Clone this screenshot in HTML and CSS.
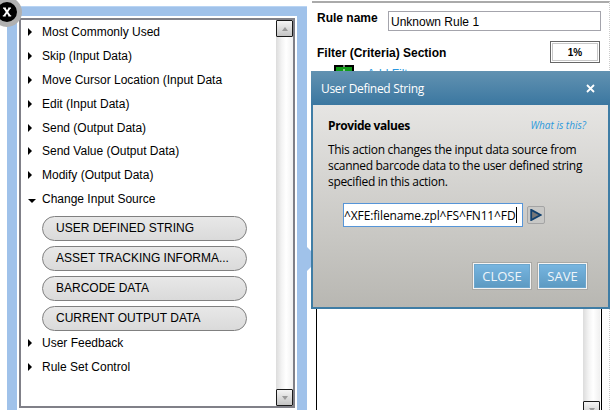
FILE: index.html
```html
<!DOCTYPE html>
<html lang="en">
<head>
  <meta charset="UTF-8">
  <meta name="viewport" content="width=device-width, initial-scale=1.0">
  <title>Rule Editor</title>
  <link rel="stylesheet" href="styles.css">
</head>
<body>
  <div class="page">
    <div class="action-panel">
      <div class="action-box">
        <ul class="action-list">
          <li class="category"><span class="arrow"></span>Most Commonly Used</li>
          <li class="category"><span class="arrow"></span>Skip (Input Data)</li>
          <li class="category"><span class="arrow"></span>Move Cursor Location (Input Data</li>
          <li class="category"><span class="arrow"></span>Edit (Input Data)</li>
          <li class="category"><span class="arrow"></span>Send (Output Data)</li>
          <li class="category"><span class="arrow"></span>Send Value (Output Data)</li>
          <li class="category"><span class="arrow"></span>Modify (Output Data)</li>
          <li class="category"><span class="arrow open"></span>Change Input Source</li>
          <li class="action-buttons">
            <button class="action-button">USER DEFINED STRING</button>
            <button class="action-button">ASSET TRACKING INFORMA...</button>
            <button class="action-button">BARCODE DATA</button>
            <button class="action-button">CURRENT OUTPUT DATA</button>
          </li>
          <li class="category"><span class="arrow"></span>User Feedback</li>
          <li class="category"><span class="arrow"></span>Rule Set Control</li>
        </ul>
        <div class="scrollbar">
          <div class="scroll-button"><span class="scroll-up"></span></div>
          <div class="scroll-button"><span class="scroll-down"></span></div>
        </div>
      </div>
      <div class="panel-close">
        <svg width="10" height="10" viewBox="0 0 10 10"><path d="M1 .5h2.900v1L5 3.300 6.200 1.500v-1H9v1.200h-.7L6.200 4.900 8.500 8.300H9.200v1.200H6.300v-1L5 6.500 3.700 8.500v1H.8V8.300h.7l2.300-3.400-2.100-3.200H1z" fill="#fff"/></svg>
      </div>
      <div class="panel-pointer"></div>
    </div>

    <div class="rule-panel">
      <div class="rule-row">
        <label class="rule-label" for="ruleName">Rule name</label>
        <input class="rule-input" type="text" id="ruleName" value="Unknown Rule 1">
      </div>
      <div class="filter-row">
        <span class="filter-label">Filter (Criteria) Section</span>
        <button class="percent-button">1%</button>
      </div>
      <div class="add-filter">
        <svg class="add-icon" width="20" height="20" viewBox="0 0 20 20"><path d="M1 1h18v18H1z" fill="#109a18" stroke="#000" stroke-width="2"/><path d="M10 0v2M10 4v12M4 10h12" stroke="#fff" stroke-width="1"/></svg>
        <a class="add-link">Add Filter</a>
      </div>
      <div class="rule-list">
        <div class="scrollbar">
          <div class="scroll-button"><span class="scroll-down"></span></div>
        </div>
      </div>
    </div>
  </div>

  <div class="dialog">
    <div class="dialog-header">
      <span class="dialog-title">User Defined String</span>
      <svg class="dialog-close" width="9" height="9" viewBox="0 0 9 9"><path d="M1 1l7 7M8 1L1 8" stroke="#fff" stroke-width="1.800"/></svg>
    </div>
    <div class="dialog-body">
      <div class="dialog-top">
        <span class="dialog-heading">Provide values</span>
        <a class="dialog-help">What is this?</a>
      </div>
      <p class="dialog-text">This action changes the input data source from<br>scanned barcode data to the user defined string<br>specified in this action.</p>
      <div class="value-row">
        <div class="value-input"><span class="value-text">^XFE:filename.zpl^FS^FN11^FD</span><span class="caret"></span></div>
        <div class="play-button">
          <svg width="12" height="12" viewBox="0 0 12 12"><path d="M1.200.9L10.600 6 1.200 11.100z" fill="#777" stroke="#12416e" stroke-width="1.800"/></svg>
        </div>
      </div>
      <div class="dialog-buttons">
        <button class="dialog-button close">CLOSE</button>
        <button class="dialog-button save">SAVE</button>
      </div>
    </div>
  </div>
</body>
</html>
```

FILE: styles.css
```css
* {
  box-sizing: border-box;
}
body {
  margin: 0;
  height: 410px;
  overflow: hidden;
  position: relative;
  background-color: #fff;
  font-family: "Liberation Sans", Arial, sans-serif;
  font-size: 12px;
  color: #000;
}
button,
input {
  font-family: inherit;
  margin: 0;
}
.page {
  display: flex;
  height: 430px;
  padding-left: 7px;
}

/* left panel */
.action-panel {
  position: relative;
  width: 300px;
  margin-top: 6px;
  padding: 9px 10px 0;
  background-color: #a0c2ea;
  border-top: 1px solid #b9d4f3;
}
.action-box {
  display: flex;
  width: 276px;
  height: 390px;
  margin: 2px;
  border: 2px solid #808088;
  outline: 2px solid #fff;
  background-color: #fff;
}
.action-list {
  flex: 1;
  list-style-type: none;
  margin: 0;
  padding: 0 0 0 7px;
}
.category {
  display: flex;
  align-items: center;
  height: 23.900px;
  white-space: nowrap;
}
.arrow {
  width: 14px;
  height: 8px;
}
.arrow::before {
  content: "";
  display: block;
  width: 0;
  height: 0;
  border-left: 4px solid #000;
  border-top: 4px solid transparent;
  border-bottom: 4px solid transparent;
}
.arrow.open {
  padding-top: 4px;
}
.arrow.open::before {
  border-top: 4px solid #000;
  border-left: 4px solid transparent;
  border-right: 4px solid transparent;
  border-bottom: none;
}
.action-buttons {
  display: flex;
  flex-direction: column;
  gap: 5px;
  padding: 5px 0 0 14px;
}
.action-button {
  width: 205px;
  height: 25px;
  padding: 0 0 1px 13px;
  border: 1px solid #808080;
  border-radius: 13px;
  background: linear-gradient(#e8e8e8, #dadada);
  font-size: 12px;
  text-align: left;
  color: #000;
}
.scrollbar {
  display: flex;
  flex-direction: column;
  justify-content: space-between;
  width: 17px;
  background: linear-gradient(to right, #dcdcdc, #f4f4f4 35%, #fff 60%, #f0f0f0);
}
.scroll-button {
  display: flex;
  align-items: center;
  justify-content: center;
  height: 17px;
  border: 1px solid #1a1a1a;
  border-radius: 1px;
  background: linear-gradient(#f4f4f4, #c4c4c4);
}
.scroll-up,
.scroll-down {
  border-left: 3px solid transparent;
  border-right: 3px solid transparent;
}
.scroll-up {
  border-bottom: 4px solid #999;
}
.scroll-down {
  border-top: 4px solid #999;
}
.panel-close {
  position: absolute;
  left: -15px;
  top: -10px;
  width: 30px;
  height: 30px;
  display: flex;
  align-items: center;
  justify-content: center;
  border: 5px solid #b0b0b0;
  border-radius: 50%;
  background-color: #000;
}
.panel-pointer {
  position: absolute;
  left: 300px;
  top: 240px;
  border-left: 12px solid #a0c2ea;
  border-top: 12px solid transparent;
  border-bottom: 12px solid transparent;
}

/* right panel */
.rule-panel {
  width: 298px;
  margin-left: 5px;
  margin-top: 1px;
  border-top: 2px solid #aaa;
  border-right: 1px dotted #ccc;
  display: flex;
  flex-direction: column;
}
.rule-row {
  display: flex;
  padding: 8px 0 0 5px;
  height: 28px;
}
.rule-label {
  width: 71px;
  font-weight: bold;
}
.rule-input {
  width: 213px;
  height: 20px;
  padding: 2px 2px 0;
  border: 1px solid #a4a4ac;
  font-size: 12px;
}
.filter-row {
  display: flex;
  justify-content: space-between;
  padding: 10px 9px 0 5px;
}
.filter-label {
  padding-top: 5px;
  font-weight: bold;
}
.percent-button {
  width: 50px;
  height: 22px;
  padding: 0;
  border: 1px solid #666;
  box-shadow: inset 0 0 0 1px #fff, inset 0 0 0 2px #c8c8c8;
  background-color: #fff;
  font-size: 10px;
  font-weight: bold;
}
.add-filter {
  display: flex;
  gap: 13px;
  height: 30px;
  padding: 2px 0 0 22px;
}
.add-link {
  color: #2a98e0;
  padding-top: 2px;
}
.rule-list {
  display: flex;
  justify-content: flex-end;
  width: 286px;
  height: 323px;
  margin: 3px 0 0 4px;
  border: 1px solid #000;
}
.rule-list .scrollbar {
  justify-content: flex-end;
  margin-right: 1px;
}

/* dialog */
.dialog {
  position: absolute;
  left: 311px;
  top: 71px;
  width: 299px;
  height: 238px;
  border: 2px solid #3f7da5;
  border-top: none;
  background-color: #3f7da5;
  font-family: "Open Sans", "Noto Sans", sans-serif;
}
.dialog-header {
  display: flex;
  align-items: center;
  justify-content: space-between;
  height: 34px;
  margin: 0 -2px;
  padding: 0 15px 0 10px;
  background: linear-gradient(#6292b1, #3b77a0);
  color: #fff;
}
.dialog-title {
  letter-spacing: -0.32px;
}
.dialog-body {
  height: 202px;
  padding: 0 13px 0 15px;
  background: linear-gradient(#e6e5e3, #b8b7b2);
}
.dialog-top {
  display: flex;
  justify-content: space-between;
  padding: 12px 9px 0 0;
  line-height: 17px;
}
.dialog-heading {
  font-weight: bold;
  letter-spacing: -0.4px;
}
.dialog-help {
  font-size: 10px;
  font-style: italic;
  color: #2a98dc;
}
.dialog-text {
  margin: 8px 0 0;
  line-height: 16px;
  letter-spacing: -0.31px;
  white-space: nowrap;
}
.value-row {
  display: flex;
  align-items: center;
  gap: 4px;
  margin: 13px 0 0 15px;
}
.value-input {
  display: flex;
  align-items: center;
  width: 180px;
  height: 24px;
  border: 1px solid #5695d8;
  background-color: #fff;
  letter-spacing: -0.12px;
  white-space: nowrap;
}
.caret {
  width: 1px;
  height: 16px;
  background-color: #000;
}
.play-button {
  display: flex;
  align-items: center;
  justify-content: center;
  width: 18px;
  height: 18px;
  border: 1px solid #a4a4a4;
  border-radius: 2px;
  background-color: #c8c8c6;
}
.dialog-buttons {
  display: flex;
  justify-content: flex-end;
  gap: 7px;
  margin-top: 36px;
  padding-right: 8px;
}
.dialog-button {
  height: 26px;
  padding: 0;
  border: 1px solid #f4f4f4;
  outline: 1px solid #aaa9a5;
  background: linear-gradient(#78b6e1, #5c99c1);
  box-shadow: inset 0 0 0 1px #6ca6cd;
  font-size: 13px;
  color: #eef5fa;
}
.close {
  width: 58px;
}
.save {
  width: 49px;
}
```
